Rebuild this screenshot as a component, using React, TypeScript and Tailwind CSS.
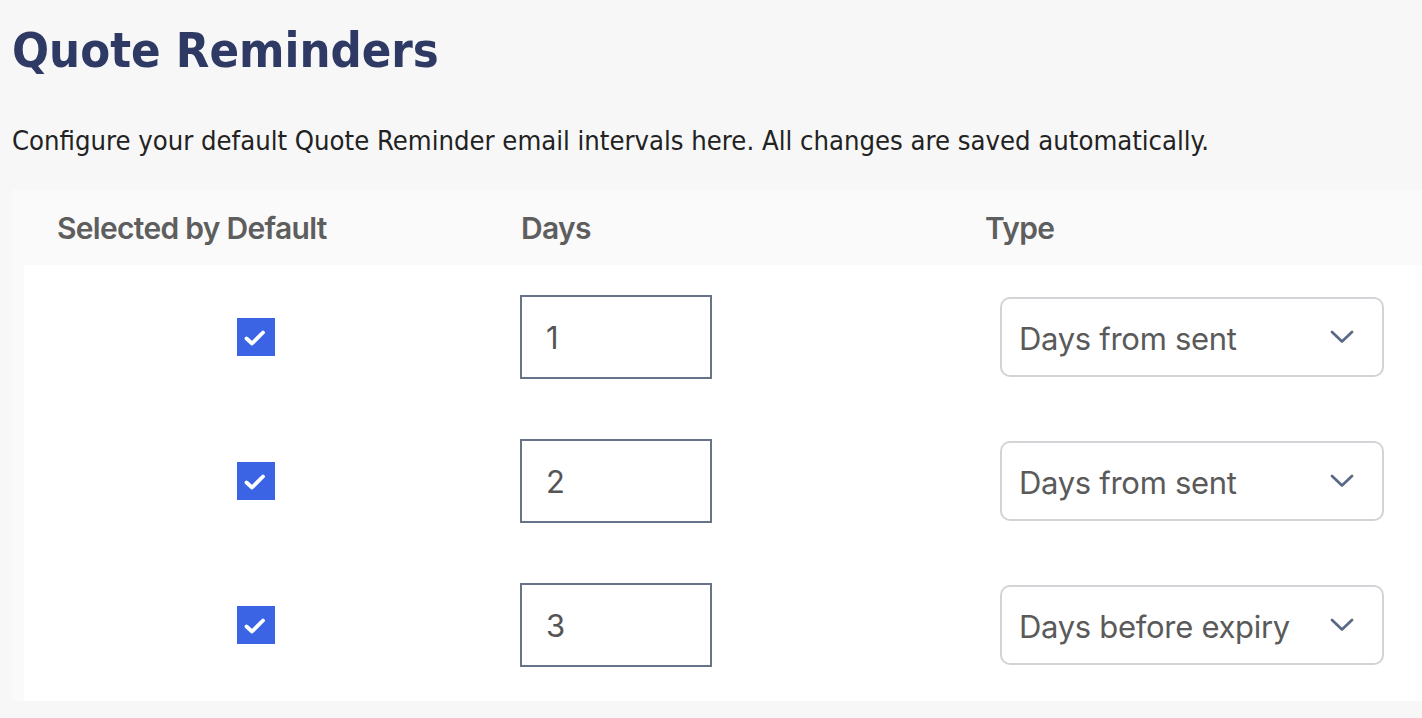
const rows = [
  { days: "1", type: "Days from sent" },
  { days: "2", type: "Days from sent" },
  { days: "3", type: "Days before expiry" },
];

function CheckBox() {
  return (
    <span className="block h-[38px] w-[38px] bg-[#3a64e3]">
      <svg width="38" height="38" viewBox="0 0 38 38" fill="none">
        <path
          d="M9.5 20.5 L15 25.5 L26 14.5"
          stroke="#ffffff"
          strokeWidth="3.8"
          strokeLinecap="round"
          strokeLinejoin="round"
        />
      </svg>
    </span>
  );
}

function Chevron() {
  return (
    <svg width="24" height="14" viewBox="0 0 24 14" fill="none">
      <path
        d="M2 2 L12 11.5 L22 2"
        stroke="#5b6a86"
        strokeWidth="2.8"
        strokeLinecap="round"
        strokeLinejoin="round"
      />
    </svg>
  );
}

export default function App() {
  return (
    <div className="h-[718px] w-[1422px] overflow-hidden bg-[#f7f7f7]">
      <h1 className="pl-[12px] pt-[20px] font-['DejaVu_Sans_Condensed','DejaVu_Sans',sans-serif] text-[48.5px] font-bold leading-[60px] text-[#2e3a64]">
        Quote Reminders
      </h1>
      <p className="mt-[43px] pl-[12px] font-['DejaVu_Sans_Condensed','DejaVu_Sans',sans-serif] text-[27.2px] leading-[36px] text-[#222222]">
        Configure your default Quote Reminder email intervals here. All changes are saved automatically.
      </p>

      <div className="ml-[12px] mt-[31px] bg-[#fafafa] font-['Inter',sans-serif]">
        <div className="flex h-[75px] items-center pl-[45px] pt-[2px] text-[30px] font-semibold tracking-[-0.7px] text-[#5e5e5e]">
          <span className="w-[464px]">Selected by Default</span>
          <span className="w-[464px]">Days</span>
          <span>Type</span>
        </div>

        <div className="ml-[12px] bg-white pb-[4px]">
          {rows.map((row) => (
            <div key={row.days} className="flex h-[144px] items-center">
              <div className="flex w-[464px] justify-center">
                <CheckBox />
              </div>
              <div className="w-[464px] pl-[32px]">
                <div className="flex h-[84px] w-[192px] items-center border-2 border-[#667389] pl-[24px] pt-[3px] text-[31px] text-[#555555]">
                  {row.days}
                </div>
              </div>
              <div className="pl-[48px]">
                <div className="flex h-[80px] w-[384px] items-center justify-between rounded-[10px] border-2 border-[#d3d3d8] pl-[17px] pr-[28px] text-[31px] tracking-[-0.3px] text-[#5a5a5a]">
                  <span className="pt-[4px]">{row.type}</span>
                  <Chevron />
                </div>
              </div>
            </div>
          ))}
        </div>
      </div>
    </div>
  );
}
